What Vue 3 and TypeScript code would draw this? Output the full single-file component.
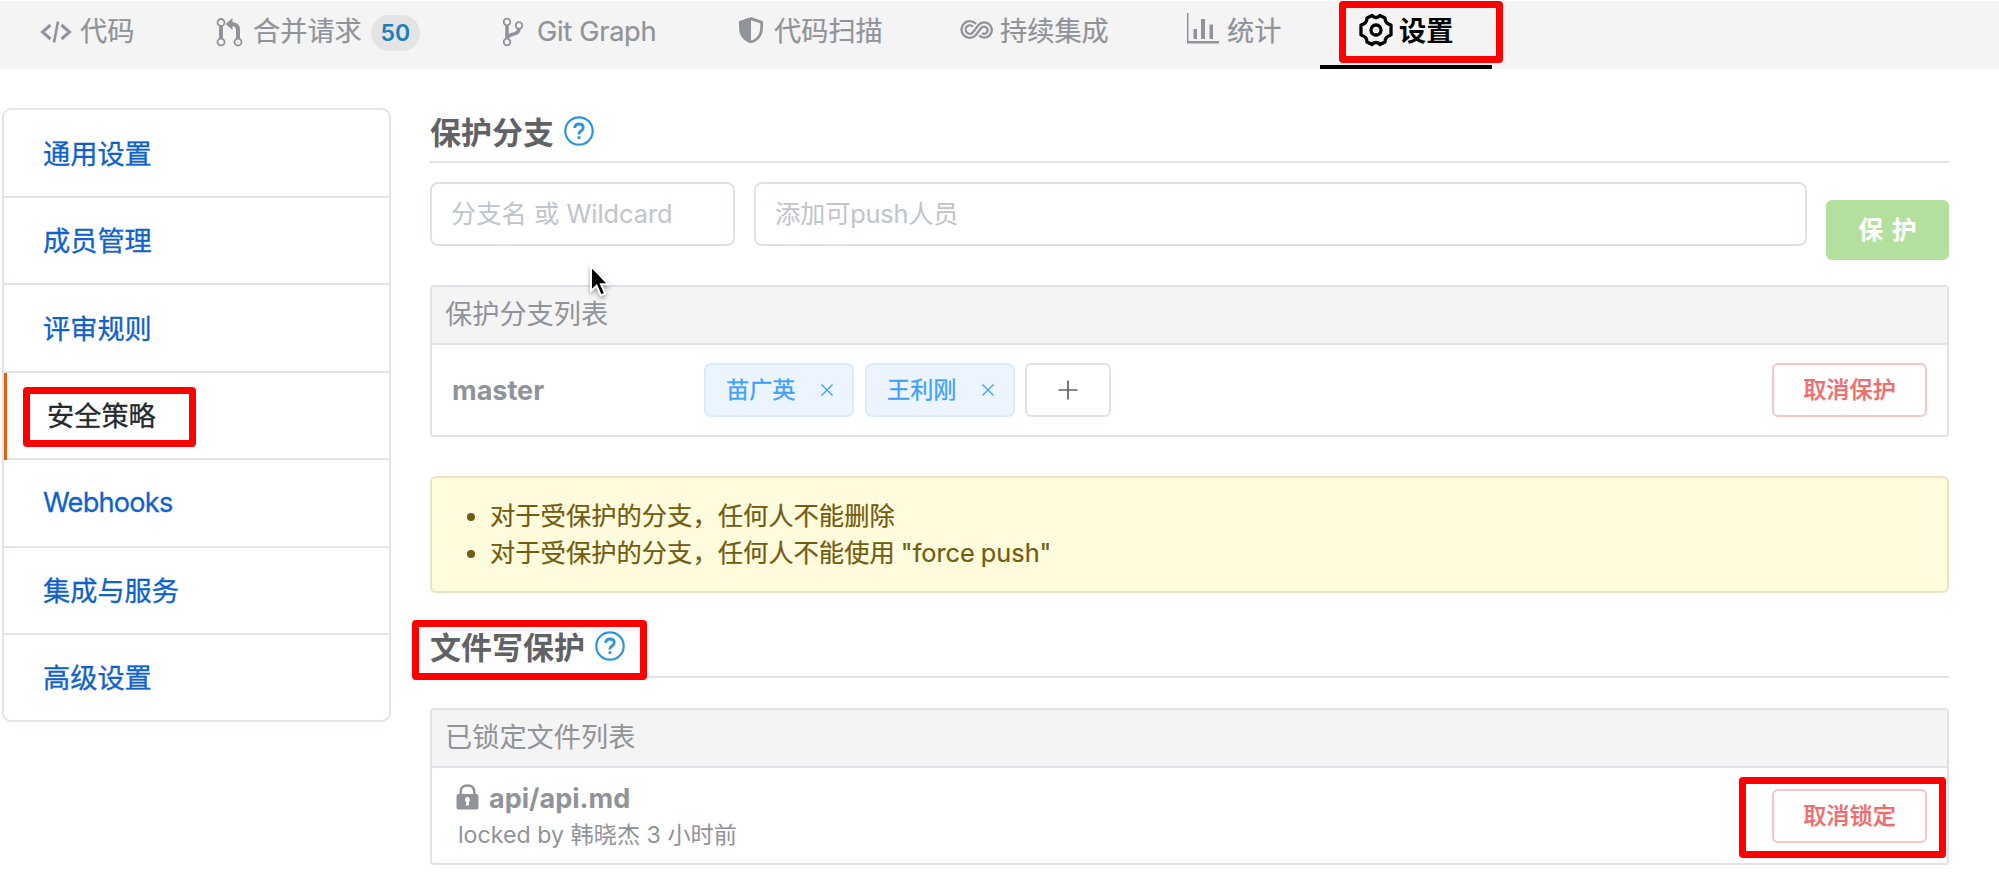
<script setup lang="ts">
interface Tab {
  key: string
  label: string
  badge?: number
}

const tabs: Tab[] = [
  { key: 'code', label: '代码' },
  { key: 'merge', label: '合并请求', badge: 50 },
  { key: 'graph', label: 'Git Graph' },
  { key: 'scan', label: '代码扫描' },
  { key: 'ci', label: '持续集成' },
  { key: 'stats', label: '统计' },
  { key: 'settings', label: '设置' },
]
const activeTab = 'settings'

const menu: string[] = ['通用设置', '成员管理', '评审规则', '安全策略', 'Webhooks', '集成与服务', '高级设置']
const activeMenu = '安全策略'

const pushers: string[] = ['苗广英', '王利刚']
const notices: string[] = [
  '对于受保护的分支，任何人不能删除',
  '对于受保护的分支，任何人不能使用 "force push"',
]
</script>

<template>
  <div class="page">
    <nav class="tabs">
      <a v-for="t in tabs" :key="t.key" class="tab" :class="[t.key, { active: t.key === activeTab }]">
        <svg v-if="t.key === 'code'" class="icon" width="32" height="24" viewBox="0 0 32 24" fill="none" stroke="currentColor" stroke-width="3">
          <path d="M10.500 5 2.500 12l8 7M21.500 5l8 7-8 7" /><path d="M18 1.500 14 22.500" stroke-width="2.600" />
        </svg>
        <svg v-else-if="t.key === 'merge'" class="icon" width="27" height="30" viewBox="0 0 27 30" fill="none" stroke="currentColor">
          <path d="M5 8v14M22 22V13q0-6-7-6" stroke-width="4" />
          <path d="M16.500 1v12L9.500 7z" fill="currentColor" stroke="none" />
          <g stroke-width="1.800" fill="#f4f4f4"><circle cx="5" cy="5.500" r="3.500" /><circle cx="5" cy="25" r="3.500" /><circle cx="22" cy="25" r="3.500" /></g>
        </svg>
        <svg v-else-if="t.key === 'graph'" class="icon" width="22" height="30" viewBox="0 0 22 30" fill="none" stroke="currentColor">
          <path d="M5 8v14M17 11q0 5-5 6-6 1-7 5" stroke-width="3.600" />
          <g stroke-width="1.800" fill="#f4f4f4"><circle cx="5" cy="5" r="3.300" /><circle cx="17" cy="8.500" r="3.300" /><circle cx="5" cy="25" r="3.300" /></g>
        </svg>
        <svg v-else-if="t.key === 'scan'" class="icon" width="26" height="28" viewBox="0 0 26 28">
          <path d="M13 1 25 5.200V11q0 10-7.500 14.500Q14.500 27 13 27t-4.500-1.500Q1 21 1 11V5.200z" fill="currentColor" />
          <path d="M13 4.200 22.300 7.300V11q0 8.500-6 12.300Q14.500 24.400 13 24.400z" fill="#f4f4f4" />
        </svg>
        <svg v-else-if="t.key === 'ci'" class="icon" width="33" height="20" viewBox="0 0 33 20" fill="none" stroke="currentColor">
          <path d="M16 4A8.300 8.300 0 1 0 15.500 15.500L21 8.300A3.600 3.600 0 1 1 22 13.200M13 6.800A4.200 4.200 0 1 0 12.500 12.800L18.500 5A7.600 7.600 0 1 1 19 15.500" stroke-width="2.300" />
        </svg>
        <svg v-else-if="t.key === 'stats'" class="icon" width="32" height="36" viewBox="0 0 32 36" fill="currentColor">
          <path d="M0 2h1.500v28H32v2.500H0zM6.500 18h3.500v10H6.500zM14 8h4v20h-4zM22.500 13.500h3.500V28h-3.500z" />
        </svg>
        <svg v-else class="icon" width="34" height="36" viewBox="0 0 34 36" fill="none" stroke="currentColor" stroke-width="3.300" stroke-linejoin="round">
          <path d="M13 3.500Q17 7.500 21 3.500L26 6Q26 11.500 32 13V23Q26 24.500 26 30L21 32.500Q17 28.500 13 32.500L8 30Q8 24.500 2 23V13Q8 11.500 8 6Z" />
          <circle cx="17" cy="18" r="5" />
        </svg>
        <span class="tab-label">{{ t.label }}</span>
        <span v-if="t.badge" class="badge">{{ t.badge }}</span>
      </a>
    </nav>

    <div class="body">
      <aside class="menu">
        <a v-for="m in menu" :key="m" class="menu-item" :class="{ active: m === activeMenu }">{{ m }}</a>
      </aside>

      <main class="main">
        <h2 class="heading">
          <span>保护分支</span>
          <svg class="help" width="30" height="30" viewBox="0 0 30 30" fill="none" stroke="currentColor" stroke-width="2.200">
            <circle cx="15" cy="15" r="13.700" />
            <path d="M10.700 12q.3-4 4.400-4t4.200 3.500q0 2-2.300 3.500t-2 3.500" stroke-width="2.800" /><path d="M15 20.300v2.700" stroke-width="2.800" />
          </svg>
        </h2>
        <div class="form">
          <div class="input branch">分支名 或 Wildcard</div>
          <div class="input people">添加可push人员</div>
          <button class="protect">保 护</button>
        </div>

        <section class="panel">
          <header class="panel-head">保护分支列表</header>
          <div class="branch-row">
            <strong class="branch-name">master</strong>
            <span v-for="p in pushers" :key="p" class="tag">
              <span class="tag-name">{{ p }}</span>
              <svg width="12" height="12" viewBox="0 0 12 12" stroke="currentColor" stroke-width="1.300"><path d="M.5.5l11 11M11.500.5l-11 11" /></svg>
            </span>
            <button class="add">
              <svg width="20" height="20" viewBox="0 0 20 20" stroke="currentColor" stroke-width="1.700"><path d="M10 .5v19M.5 10h19" /></svg>
            </button>
            <button class="danger">取消保护</button>
          </div>
        </section>

        <ul class="notice">
          <li v-for="n in notices" :key="n">{{ n }}</li>
        </ul>

        <h2 class="heading second">
          <span>文件写保护</span>
          <svg class="help" width="30" height="30" viewBox="0 0 30 30" fill="none" stroke="currentColor" stroke-width="2.200">
            <circle cx="15" cy="15" r="13.700" />
            <path d="M10.700 12q.3-4 4.400-4t4.200 3.500q0 2-2.300 3.500t-2 3.500" stroke-width="2.800" /><path d="M15 20.300v2.700" stroke-width="2.800" />
          </svg>
        </h2>

        <section class="panel locks">
          <header class="panel-head">已锁定文件列表</header>
          <div class="lock-row">
            <div class="lock-info">
              <div class="file">
                <svg width="23" height="26" viewBox="0 0 23 26">
                  <path d="M4.700 12V8q0-6.500 6.800-6.500T18.300 8v4" fill="none" stroke="currentColor" stroke-width="2.400" />
                  <rect x="0.500" y="10" width="22" height="15.500" rx="2" fill="currentColor" />
                  <path d="M11.500 13a2.800 2.800 0 0 1 1.400 5v3.500h-2.800V18a2.800 2.800 0 0 1 1.400-5" fill="#fff" />
                </svg>
                <strong>api/api.md</strong>
              </div>
              <div class="locked-by">locked by 韩晓杰 3 小时前</div>
            </div>
            <button class="danger">取消锁定</button>
          </div>
        </section>
      </main>
    </div>

    <i class="mark mark-tab"></i>
    <i class="mark mark-menu"></i>
    <i class="mark mark-title"></i>
    <i class="mark mark-unlock"></i>
    <svg class="cursor" width="26" height="36" viewBox="0 0 26 36">
      <path d="M3 2v25l5.600-5.200 4.200 9.700 4.300-1.900-4.100-9.400h7.500z" fill="#000" stroke="#fff" stroke-width="2" />
    </svg>
  </div>
</template>

<style>
body {
  margin: 0;
  background: #fff;
}
</style>

<style scoped>
.page {
  position: relative;
  width: 1999px;
  height: 893px;
  overflow: hidden;
  font-family: Inter, "Noto Sans CJK SC", sans-serif;
  color: #909399;
}
.page *,
.page *::before {
  box-sizing: border-box;
}
button {
  font: inherit;
  padding: 0;
}
.tabs {
  display: flex;
  height: 69px;
  border-top: 1px solid #fff;
  background: #f4f4f4;
  font-size: 27.2px;
}
.tab {
  display: flex;
  align-items: center;
  flex: none;
  height: 68px;
  padding-bottom: 7px;
  white-space: nowrap;
}
.icon {
  flex: none;
}
.tab-label {
  line-height: 40px;
  -webkit-text-stroke: 0.2px currentColor;
}
.code { width: 216px; padding-left: 40px; }
.code .icon { margin-right: 8px; }
.merge { width: 286px; }
.merge .icon { margin-right: 10px; }
.graph { width: 236px; }
.graph .icon { margin-right: 13px; }
.graph .tab-label { letter-spacing: -0.3px; }
.scan { width: 222px; }
.scan .icon { margin: -3px 10px 0 0; }
.ci { width: 227px; }
.ci .icon { margin: -3px 7px 0 0; }
.stats { width: 133px; }
.stats .icon { margin: -5px 8px 0 0; }
.settings { width: 172px; padding-left: 39px; }
.settings .icon { margin: -4px 6px 0 0; }
.active.tab {
  color: #000;
  font-weight: 700;
  border-bottom: 4px solid #000;
  padding-bottom: 3px;
}
.active .tab-label {
  -webkit-text-stroke: 0;
}
.badge {
  margin: 3px 0 0 9px;
  width: 49px;
  height: 36px;
  border-radius: 18px;
  background: #e4e4e4;
  color: #1c7fba;
  font-size: 23px;
  font-weight: 600;
  line-height: 36px;
  text-align: center;
}
.body {
  display: flex;
  align-items: flex-start;
}
.menu {
  margin: 39px 0 0 2px;
  width: 389px;
  height: 614px;
  border: 2px solid #e1e4e8;
  border-radius: 9px;
  display: grid;
  grid-template-rows: 88px 87px 88px 87px 88px 87px 85px;
}
.menu-item {
  display: flex;
  align-items: center;
  padding: 0 0 3px 39px;
  border-bottom: 2px solid #e1e4e8;
  color: #0f62cc;
  font-size: 27.200px;
  -webkit-text-stroke: 0.3px currentColor;
}
.menu-item:nth-child(5) {
  padding-bottom: 1px;
  letter-spacing: -0.8px;
}
.menu-item:last-child {
  border-bottom: 0;
}
.menu-item.active {
  position: relative;
  color: #24292e;
  padding-left: 43px;
}
.menu-item.active::before {
  content: "";
  position: absolute;
  left: 0;
  top: 0;
  width: 3px;
  height: 87px;
  background: #e36209;
}
.main {
  margin-left: 39px;
  width: 1519px;
}
.heading {
  display: flex;
  align-items: center;
  margin: 36px 0 0;
  height: 58px;
  padding-bottom: 5px;
  border-bottom: 2px solid #e1e2e9;
  color: #606266;
  font-size: 31px;
  font-weight: 700;
}
.help {
  margin: 1px 0 0 10px;
  color: #2f95d9;
}
.form {
  display: flex;
  align-items: flex-start;
  margin-top: 19px;
}
.input {
  height: 64px;
  border: 2px solid #dfe1e8;
  border-radius: 8px;
  padding-left: 19px;
  font-size: 25.300px;
  line-height: 60px;
  color: #c0c4cc;
}
.branch { width: 305px; }
.people { width: 1053px; margin-left: 19px; letter-spacing: -0.2px; }
.protect {
  margin: 18px 0 0 19px;
  width: 123px;
  height: 60px;
  padding-bottom: 4px;
  border: 0;
  border-radius: 6px;
  background: #b3e19d;
  color: #fff;
  font-size: 25px;
  font-weight: 600;
  word-spacing: 2px;
}
.panel {
  margin-top: 25px;
  height: 152px;
  border: 2px solid #e1e2e9;
  border-radius: 4px;
}
.panel-head {
  height: 58px;
  border-bottom: 2px solid #e1e2e9;
  background: #f4f4f4;
  padding-left: 13px;
  font-size: 27.200px;
  line-height: 55px;
}
.branch-row {
  display: flex;
  align-items: center;
  height: 90px;
  padding: 0 20px;
}
.branch-name {
  width: 252px;
  font-size: 27px;
}
.tag {
  display: flex;
  align-items: center;
  justify-content: space-between;
  width: 150px;
  height: 54px;
  margin-right: 11px;
  padding: 0 19px 0 20px;
  border: 2px solid #d9ecff;
  border-radius: 7px;
  background: #ecf5ff;
  color: #409eff;
  font-size: 23.200px;
}
.tag-name {
  padding-bottom: 4px;
  -webkit-text-stroke: 0.3px currentColor;
}
.add {
  display: flex;
  align-items: center;
  justify-content: center;
  width: 86px;
  height: 54px;
  margin-left: -1px;
  border: 2px solid #dfe1e8;
  border-radius: 6px;
  background: #fff;
  color: #606266;
}
.danger {
  margin-left: auto;
  width: 155px;
  height: 54px;
  padding-bottom: 4px;
  border: 2px solid #fbc4c4;
  border-radius: 6px;
  background: #fff;
  color: #ee6e6e;
  font-size: 23.200px;
  font-weight: 500;
  -webkit-text-stroke: 0.25px currentColor;
}
.notice {
  margin: 39px 0 0;
  height: 117px;
  padding: 19px 0 0 58px;
  border: 2px solid #e8e4c4;
  border-radius: 6px;
  background: #fffbdd;
  color: #735c0f;
  font-size: 25.300px;
  line-height: 37px;
  word-spacing: -1px;
  -webkit-text-stroke: 0.2px currentColor;
}
.second {
  margin-top: 27px;
}
.locks {
  margin-top: 30px;
  height: 157px;
}
.lock-row {
  display: flex;
  padding: 0 20px 0 24px;
}
.lock-row .danger {
  margin-top: 21px;
}
.file {
  display: flex;
  align-items: center;
  gap: 10px;
  margin-top: 10px;
  height: 40px;
  font-size: 27px;
}
.file svg {
  margin-top: -2px;
}
.locked-by {
  padding-left: 2px;
  font-size: 23.200px;
  line-height: 32px;
  margin-top: 1px;
}
.mark {
  position: absolute;
  border: 7px solid #f00;
  border-radius: 4px;
}
.mark-tab { left: 1339px; top: 1px; width: 164px; height: 62px; }
.mark-menu { left: 23px; top: 387px; width: 173px; height: 60px; }
.mark-title { left: 412px; top: 620px; width: 235px; height: 60px; }
.mark-unlock { left: 1739px; top: 777px; width: 207px; height: 81px; }
.cursor {
  position: absolute;
  left: 588px;
  top: 264px;
  filter: drop-shadow(0 2px 2px rgba(0, 0, 0, 0.35));
}
</style>
